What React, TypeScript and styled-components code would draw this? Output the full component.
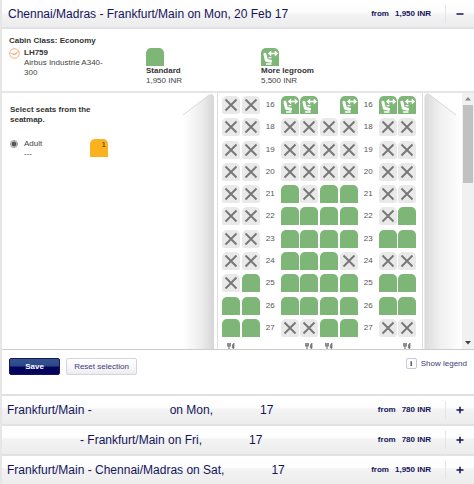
import React, { useState } from "react";
import styled, { createGlobalStyle } from "styled-components";

const navy = "#14145c";
const green = "#7eb678";

const GlobalStyle = createGlobalStyle`
  * { box-sizing: border-box; }
  body {
    margin: 0;
    background: #fff;
    color: #444;
    font: 8px/10px "Liberation Sans", Arial, sans-serif;
  }
  button, input { font-family: inherit; margin: 0; }
`;

const Page = styled.main`
  display: flex;
  flex-direction: column;
  border-left: 2px solid #e6e6e6;
`;

const FlightBar = styled.header<{ $open?: boolean }>`
  display: flex;
  align-items: center;
  height: ${(p) => (p.$open ? 29 : 30)}px;
  padding-left: ${(p) => (p.$open ? 6 : 5)}px;
  border-bottom: 2px solid #e2e2e4;
  background: ${(p) =>
    p.$open
      ? "linear-gradient(#fff 0%, #fcfcfc 45%, #f3f3f3 55%, #ececee 100%)"
      : "linear-gradient(#fff 0%, #fdfdfd 42%, #f3f3f3 46%, #ededed 100%)"};
  color: ${navy};
`;

const Title = styled.h2`
  display: flex;
  flex: 1;
  margin: 0;
  font-size: 12px;
  line-height: 18px;
  font-weight: 400;
  white-space: pre;
`;

const Blank = styled.span<{ $w: number }>`
  width: ${(p) => p.$w}px;
`;

const Price = styled.span`
  display: flex;
  gap: 6px;
  padding-right: 14px;
  font-size: 8px;
  font-weight: 700;
  line-height: 10px;
  white-space: nowrap;
`;

const Toggle = styled.button`
  display: flex;
  align-items: center;
  justify-content: center;
  width: 29px;
  height: 18px;
  padding: 0;
  border: 0;
  border-left: 1px solid #e4e4e8;
  background: none;
  color: ${navy};
`;

const Info = styled.section`
  height: 64px;
  padding: 7px 0 0 7px;
  border-bottom: 2px solid #e6e6e6;
`;

const Strong = styled.strong`
  display: block;
  color: #333;
`;

const InfoGrid = styled.div`
  display: grid;
  grid-template-columns: 15px 122px 115px 1fr;
  margin-top: 2px;
`;

const Flight = styled.div`
  padding-right: 34px;
`;

const Fare = styled.div`
  display: flex;
  flex-direction: column;
`;

const SeatShape = styled.span<{ $color?: string }>`
  display: flex;
  align-items: center;
  justify-content: center;
  width: 18px;
  height: 18px;
  border-radius: 5px 5px 0 0;
  background: ${(p) => p.$color || green};
`;

const MapPanel = styled.section`
  display: flex;
  height: 257px;
  border-bottom: 1px solid #ccc;
  overflow: hidden;
`;

const Passengers = styled.fieldset`
  flex: 1;
  min-width: 0;
  margin: 0;
  padding: 12px 0 0 8px;
  border: 0;
`;

const Prompt = styled.div`
  width: 96px;
  margin-bottom: 14px;
  color: #333;
  font-weight: 700;
`;

const Passenger = styled.div`
  display: grid;
  grid-template-columns: 14px 66px 18px;
`;

const Radio = styled.input`
  appearance: none;
  width: 8px;
  height: 8px;
  margin-top: 1px;
  border: 1px solid #999;
  border-radius: 50%;
  background: #eee;
  &:checked { background: radial-gradient(circle, #555 0 2px, #eee 3px); }
`;

const Assigned = styled(SeatShape)`
  align-items: flex-start;
  justify-content: flex-end;
  padding: 1px 2px;
  color: #553500;
`;

const Wing = styled.svg`
  display: block;
  flex: none;
  height: 256px;
`;

const Cabin = styled.div`
  flex: none;
  width: 206px;
  padding: 3px 4px 0;
  border: solid #ddd;
  border-width: 0 1px;
`;

const SeatRows = styled.div`
  display: flex;
  flex-direction: column;
  justify-content: space-between;
  height: 241px;
`;

const SeatRow = styled.div`
  display: grid;
  grid-template-columns: repeat(10, 1fr);
`;

const Seat = styled.button<{ $kind: string }>`
  display: flex;
  align-items: center;
  justify-content: center;
  width: 18px;
  height: 18px;
  padding: 0;
  border: 0;
  border-radius: 5px 5px ${(p) => (p.$kind === "x" ? "2px 2px" : "0 0")};
  background: ${(p) => (p.$kind === "x" ? "#e9e9e9" : green)};
`;

const RowNumber = styled.span`
  width: 18px;
  color: #555;
  line-height: 18px;
  text-align: center;
`;

const GalleyRow = styled(SeatRow)`
  height: 12px;
  padding-top: 6px;
`;

const Galley = styled.span`
  display: flex;
  justify-content: center;
  width: 18px;
`;

const Scrollbar = styled.div`
  display: flex;
  flex: none;
  flex-direction: column;
  align-items: center;
  width: 12px;
  background: #f1f1f1;
`;

const ScrollStep = styled.button`
  display: flex;
  align-items: center;
  justify-content: center;
  width: 12px;
  height: 12px;
  padding: 0;
  border: 0;
  background: none;
`;

const Thumb = styled.div`
  width: 10px;
  height: 78px;
  margin-bottom: auto;
  background: #c1c1c1;
`;

const Actions = styled.section`
  display: flex;
  align-items: flex-start;
  gap: 6px;
  height: 46px;
  padding: 8px 7px 0;
  border-bottom: 2px solid #e0e0e2;
`;

const Action = styled.button<{ $primary?: boolean }>`
  width: ${(p) => (p.$primary ? 51 : 71)}px;
  height: 17px;
  padding: 0;
  border: 1px solid ${(p) => (p.$primary ? "#16165c" : "#d4d4da")};
  border-radius: 2px;
  background: ${(p) =>
    p.$primary
      ? "linear-gradient(#34528f 0%, #2b4789 48%, #04045c 52%, #04045c 100%)"
      : "linear-gradient(#fff, #f8f8f8 50%, #ededf0)"};
  color: ${(p) => (p.$primary ? "#fff" : "#3c3c78")};
  font-size: 8px;
  font-weight: ${(p) => (p.$primary ? 700 : 400)};
  line-height: 14px;
  white-space: nowrap;
`;

const Legend = styled.a`
  display: flex;
  align-items: center;
  gap: 4px;
  margin-left: auto;
  color: #3c3c78;
  text-decoration: none;
`;

const InfoMark = styled.span`
  width: 11px;
  height: 11px;
  border: 1px solid #c8c8d8;
  border-radius: 2px;
  color: ${navy};
  font-weight: 700;
  line-height: 10px;
  text-align: center;
`;

const Sign = ({ plus }: { plus?: boolean }) => (
  <svg width="8" height="8" viewBox="0 0 8 8" stroke={navy} strokeWidth="1.5">
    <path d={plus ? "M.5 4h7M4 .8v6.4" : "M.5 4h7"} />
  </svg>
);

const Legroom = () => (
  <svg width="18" height="18" viewBox="0 0 18 18" fill="none" stroke="#fff" aria-hidden="true">
    <path d="M3.9 6.2 5.4 12.3 9.6 13.2" strokeWidth="3" strokeLinecap="round" strokeLinejoin="round" />
    <path d="M5 16h5.5M7.5 9.6h3" strokeWidth="1.4" />
    <path d="M9 5.5h6" strokeWidth="1.6" />
    <path d="M10.2 2.4 6.8 5.5l3.4 3.1zM13.8 2.4l3.4 3.1-3.4 3.1z" fill="#fff" stroke="none" />
  </svg>
);

const Cross = () => (
  <svg width="18" height="18" viewBox="0 0 18 18" stroke="#777" strokeWidth="1.9" aria-hidden="true">
    <path d="M3.5 3.5 14.5 14.5M14.5 3.5 3.5 14.5" />
  </svg>
);

const Cutlery = () => (
  <svg width="8" height="9" viewBox="0 0 8 9" fill="none" stroke="#777" aria-hidden="true">
    <path d="M.7 0v3h2.6V0M2 0v9" strokeWidth="1.1" />
    <path d="M7 0Q5 1 5.3 5H7zM6.6 4v5" fill="#777" strokeWidth=".8" />
  </svg>
);

const Crane = () => (
  <svg width="11" height="11" viewBox="0 0 11 11" fill="none" stroke="#f2ae78" aria-hidden="true">
    <circle cx="5.5" cy="5.5" r="4.8" strokeWidth="1" />
    <path d="M1.5 5.2 4.8 6.5 9.5 3.4M4 5.2l1.2 1.6L8 5.5" strokeWidth="1" />
  </svg>
);

const ScrollArrow = ({ down }: { down?: boolean }) => (
  <svg width="6" height="4" viewBox="0 0 6 4" fill={down ? "#444" : "#888"}>
    <path d={down ? "M0 0h6L3 3.5z" : "M0 3.5h6L3 0z"} />
  </svg>
);

// x = occupied, s = standard, l = more legroom, . = no seat, # = row number
const rows: [number, string][] = [
  [16, "xx#ll.l#ll"],
  [18, "xx#xxxx#xx"],
  [19, "xx#xxxx#xx"],
  [20, "xx#xxxx#xx"],
  [21, "xx#sxss#xx"],
  [22, "xx#ssss#xs"],
  [23, "xx#ssss#ss"],
  [24, "xx#sssx#xx"],
  [25, "xs#ssss#ss"],
  [26, "ss#ssss#ss"],
  [27, "ss#xxss#xx"],
];
const letters = "AC DEFG HK";

export default function App() {
  const [selected, setSelected] = useState(true);
  return (
    <>
      <GlobalStyle />
      <Page>
        <FlightBar $open>
          <Title>Chennai/Madras - Frankfurt/Main on Mon, 20 Feb 17</Title>
          <Price><span>from</span><span>1,950 INR</span></Price>
          <Toggle aria-label="Collapse flight"><Sign /></Toggle>
        </FlightBar>

        <Info>
          <Strong>Cabin Class: Economy</Strong>
          <InfoGrid>
            <Crane />
            <Flight><Strong>LH759</Strong>Airbus Industrie A340-300</Flight>
            <Fare><SeatShape /><Strong>Standard</Strong>1,950 INR</Fare>
            <Fare><SeatShape><Legroom /></SeatShape><Strong>More legroom</Strong>5,500 INR</Fare>
          </InfoGrid>
        </Info>

        <MapPanel>
          <Passengers>
            <Prompt>Select seats from the<br />seatmap.</Prompt>
            <Passenger>
              <Radio type="radio" id="adult" name="passenger" checked={selected} onChange={() => setSelected(true)} />
              <label htmlFor="adult">Adult<br />---</label>
              <Assigned $color="#fbb21f">1</Assigned>
            </Passenger>
          </Passengers>
          <Wing width="34" viewBox="0 0 34 256">
            <defs>
              <linearGradient id="wingLeft">
                <stop offset="0" stopColor="#fff" />
                <stop offset=".6" stopColor="#ececec" />
                <stop offset="1" stopColor="#d6d6d6" />
              </linearGradient>
            </defs>
            <path d="M0 22 26 2Q30-1 31 4V256H0z" fill="url(#wingLeft)" />
            <path d="M0 22 26 2" stroke="#d8d8d8" />
          </Wing>
          <Cabin>
            <SeatRows>
              {rows.map(([n, seats]) => (
                <SeatRow key={n}>
                  {seats.split("").map((kind, i) =>
                    kind === "#" ? (
                      <RowNumber key={i}>{n}</RowNumber>
                    ) : kind === "." ? (
                      <span key={i} />
                    ) : (
                      <Seat key={i} $kind={kind} disabled={kind === "x"} aria-label={`Seat ${n}${letters[i]}`}>
                        {kind === "x" && <Cross />}
                        {kind === "l" && <Legroom />}
                      </Seat>
                    )
                  )}
                </SeatRow>
              ))}
            </SeatRows>
            <GalleyRow>
              {"f...ff...f".split("").map((c, i) => (
                <Galley key={i}>{c === "f" && <Cutlery />}</Galley>
              ))}
            </GalleyRow>
          </Cabin>
          <Wing width="39" viewBox="0 0 39 256">
            <defs>
              <linearGradient id="wingRight">
                <stop offset="0" stopColor="#dcdcdc" />
                <stop offset=".4" stopColor="#efefef" />
                <stop offset="1" stopColor="#fff" />
              </linearGradient>
            </defs>
            <path d="M2 4Q3-1 7 2L33 22 39 27V256H2z" fill="url(#wingRight)" />
            <path d="M2 256V4Q3-1 7 2L33 22" fill="none" stroke="#d8d8d8" />
          </Wing>
          <Scrollbar>
            <ScrollStep aria-label="Scroll up"><ScrollArrow /></ScrollStep>
            <Thumb />
            <ScrollStep aria-label="Scroll down"><ScrollArrow down /></ScrollStep>
          </Scrollbar>
        </MapPanel>

        <Actions>
          <Action $primary>Save</Action>
          <Action onClick={() => setSelected(false)}>Reset selection</Action>
          <Legend href="#legend"><InfoMark>i</InfoMark>Show legend</Legend>
        </Actions>

        <FlightBar>
          <Title>Frankfurt/Main -<Blank $w={78} />on Mon,<Blank $w={47} />17</Title>
          <Price><span>from</span><span>780 INR</span></Price>
          <Toggle aria-label="Expand flight"><Sign plus /></Toggle>
        </FlightBar>
        <FlightBar>
          <Title><Blank $w={73} />- Frankfurt/Main on Fri,<Blank $w={47} />17</Title>
          <Price><span>from</span><span>780 INR</span></Price>
          <Toggle aria-label="Expand flight"><Sign plus /></Toggle>
        </FlightBar>
        <FlightBar>
          <Title>Frankfurt/Main - Chennai/Madras on Sat,<Blank $w={47} />17</Title>
          <Price><span>from</span><span>1,950 INR</span></Price>
          <Toggle aria-label="Expand flight"><Sign plus /></Toggle>
        </FlightBar>
      </Page>
    </>
  );
}
